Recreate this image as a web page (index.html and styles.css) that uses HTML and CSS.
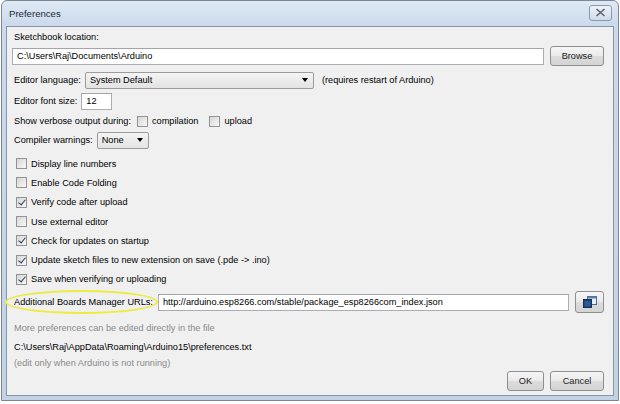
FILE: index.html
```html
<!DOCTYPE html>
<html>
<head>
<meta charset="utf-8">
<link rel="stylesheet" href="styles.css">
</head>
<body>
<div class="window">
  <div class="titlebar">
    <span class="title">Preferences</span>
    <span class="close"><svg width="11" height="9" viewBox="0 0 11 9"><path d="M1.5 1 L9.5 8 M9.5 1 L1.5 8" stroke="#5a6470" stroke-width="1.6" fill="none"/></svg></span>
  </div>
  <div class="content">
    <div class="row r-label"><span>Sketchbook location:</span></div>
    <div class="row r-sketch">
      <div class="input grow">C:\Users\Raj\Documents\Arduino</div>
      <div class="btn browse">Browse</div>
    </div>
    <div class="row r-lang">
      <span class="lbl">Editor language:</span>
      <div class="select lang"><span>System Default</span><span class="arrow"></span></div>
      <span class="note">(requires restart of Arduino)</span>
    </div>
    <div class="row r-font">
      <span class="lbl">Editor font size:</span>
      <div class="input fontsize">12</div>
    </div>
    <div class="row r-verbose">
      <span class="lbl">Show verbose output during:</span>
      <span class="cb"></span><span class="cbtext">compilation</span>
      <span class="cb"></span><span class="cbtext">upload</span>
    </div>
    <div class="row r-warn">
      <span class="lbl">Compiler warnings:</span>
      <div class="select warn"><span>None</span><span class="arrow"></span></div>
    </div>
    <div class="checks">
      <div class="crow"><span class="cb"></span><span>Display line numbers</span></div>
      <div class="crow"><span class="cb"></span><span>Enable Code Folding</span></div>
      <div class="crow"><span class="cb on"></span><span>Verify code after upload</span></div>
      <div class="crow"><span class="cb"></span><span>Use external editor</span></div>
      <div class="crow"><span class="cb on"></span><span>Check for updates on startup</span></div>
      <div class="crow"><span class="cb on"></span><span>Update sketch files to new extension on save (.pde -&gt; .ino)</span></div>
      <div class="crow"><span class="cb on"></span><span>Save when verifying or uploading</span></div>
    </div>
    <div class="row r-url">
      <span class="lbl urllbl">Additional Boards Manager URLs:<span class="ring"></span></span>
      <div class="input grow url">http://arduino.esp8266.com/stable/package_esp8266com_index.json</div>
      <div class="btn iconbtn"><svg width="14" height="12" viewBox="0 0 14 12"><rect x="4.5" y="0.5" width="9" height="8" fill="#e8eef6" stroke="#4d6a8e"/><rect x="4.5" y="0.5" width="9" height="2" fill="#5b7fb0"/><rect x="0.5" y="3.5" width="8" height="8" fill="#1f3f6f" stroke="#15305a"/><rect x="1.5" y="5" width="6" height="5.5" fill="#2e5a94"/></svg></div>
    </div>
    <div class="info gray i1">More preferences can be edited directly in the file</div>
    <div class="info i2">C:\Users\Raj\AppData\Roaming\Arduino15\preferences.txt</div>
    <div class="info gray i3">(edit only when Arduino is not running)</div>
    <div class="row r-buttons">
      <div class="btn ok">OK</div>
      <div class="btn cancel">Cancel</div>
    </div>
  </div>
</div>
</body>
</html>
```

FILE: styles.css
```css
html, body {
  margin: 0;
  padding: 0;
  background: #ffffff;
}
body {
  font-family: "Liberation Sans", Arial, sans-serif;
  font-size: 9.2px;
  color: #000;
}
.window {
  box-sizing: border-box;
  width: 618px;
  height: 401px;
  margin-left: 1px;
  border: 1px solid #7d8794;
  border-radius: 6px 6px 0 0;
  background: linear-gradient(to bottom, #dfe9f5 0px, #cbdaec 24px, #c3d3e6 100%);
  padding: 0 4px 4px 4px;
  display: flex;
  flex-direction: column;
}
.titlebar {
  height: 25px;
  display: flex;
  align-items: center;
  justify-content: space-between;
  flex: none;
}
.title {
  margin-left: 3px;
  margin-top: -1px;
  color: #1e2a38;
  font-size: 9.6px;
}
.close {
  width: 21px;
  height: 14px;
  margin-right: 2px;
  margin-top: -2px;
  border: 1px solid #8c99a8;
  border-radius: 3px;
  background: linear-gradient(#eef3f9, #cfdbe9);
  display: flex;
  align-items: center;
  justify-content: center;
}
.content {
  flex: 1;
  background: #f0f0f0;
  border: 1px solid #8795a6;
  padding: 0 9px 0 5px;
  display: flex;
  flex-direction: column;
}
.row {
  display: flex;
  align-items: center;
  flex: none;
}
.r-label { height: 14px; margin-top: 3px; padding-left: 2px; }
.r-sketch { height: 20px; margin-top: 2px; }
.r-lang { height: 18px; margin-top: 5px; padding-left: 2px; }
.r-font { height: 18px; margin-top: 3px; padding-left: 2px; }
.r-verbose { height: 14px; margin-top: 4px; padding-left: 2px; }
.r-warn { height: 18px; margin-top: 3px; padding-left: 2px; }
.input {
  box-sizing: border-box;
  height: 17px;
  background: #fff;
  border: 1px solid #abadb3;
  border-top-color: #a2a5ac;
  padding: 0 4px;
  display: flex;
  align-items: center;
  white-space: nowrap;
  overflow: hidden;
}
.grow { flex: 1; }
.btn {
  box-sizing: border-box;
  height: 20px;
  border: 1px solid #8e8f8f;
  border-radius: 3px;
  background: linear-gradient(to bottom, #f6f6f6 0%, #eaeaea 50%, #dcdcdc 51%, #d4d4d4 100%);
  display: flex;
  align-items: center;
  justify-content: center;
  flex: none;
  color: #222;
}
.browse { width: 54px; margin-left: 6px; }
.lbl { margin-right: 4px; }
.select {
  box-sizing: border-box;
  height: 17px;
  border: 1px solid #9c9c9c;
  border-radius: 2px;
  background: linear-gradient(#f4f4f4, #e3e3e3);
  display: flex;
  align-items: center;
  justify-content: space-between;
  padding: 0 5px 0 4px;
}
.lang { width: 229px; }
.note { margin-left: 8px; }
.arrow {
  width: 0;
  height: 0;
  border-left: 3.5px solid transparent;
  border-right: 3.5px solid transparent;
  border-top: 4px solid #000;
}
.fontsize { width: 31px; padding-left: 4px; }
.warn { width: 52px; }
.cb {
  box-sizing: border-box;
  width: 11px;
  height: 11px;
  border: 1px solid #939393;
  background: linear-gradient(135deg, #d6d6d6, #f8f8f8);
  flex: none;
  position: relative;
}
.cb.on::after {
  content: "";
  position: absolute;
  left: 3px;
  top: 0px;
  width: 3px;
  height: 6px;
  border-right: 1.6px solid #2b3a55;
  border-bottom: 1.6px solid #2b3a55;
  transform: rotate(40deg);
}
.r-verbose .cb { margin-left: 2px; }
.cbtext { margin-left: 4px; margin-right: 9px; }
.checks {
  margin-top: 5px;
  padding-left: 4px;
  display: flex;
  flex-direction: column;
}
.crow {
  height: 19.3px;
  display: flex;
  align-items: center;
}
.crow .cb { margin-right: 4px; }
.r-url { height: 22px; margin-top: 2px; padding-left: 2px; }
.urllbl { position: relative; margin-right: 5px; }
.ring {
  position: absolute;
  left: -9px;
  top: -7px;
  right: -5px;
  bottom: -7px;
  border: 2px solid #eeec3a;
  border-radius: 50%;
}
.url { height: 17px; }
.iconbtn { width: 29px; height: 22px; margin-left: 6px; }
.info { flex: none; padding-left: 2px; }
.gray { color: #8a8a8a; }
.i1 { margin-top: 10px; }
.i2 { margin-top: 9px; }
.i3 { margin-top: 6px; }
.r-buttons { justify-content: flex-end; margin-top: 3px; }
.ok { width: 37px; }
.cancel { width: 54px; margin-left: 6px; }
```
